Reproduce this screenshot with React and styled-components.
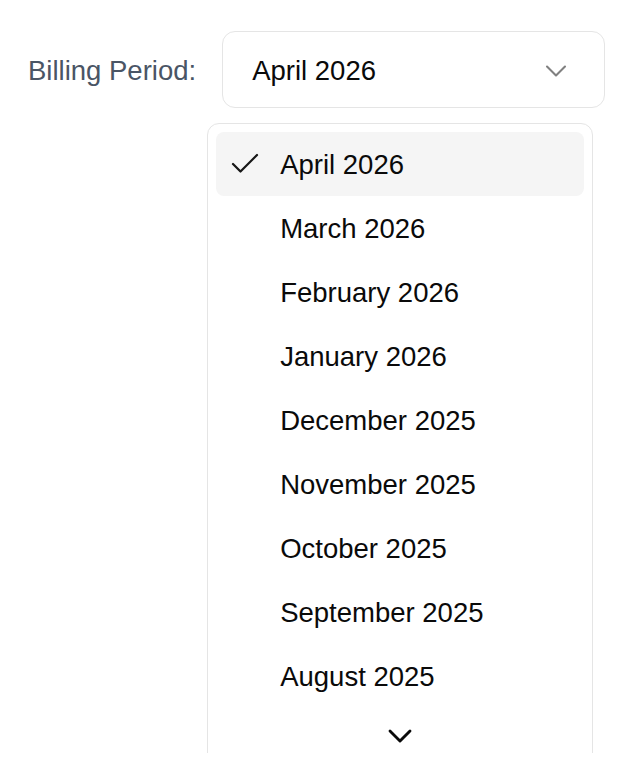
import styled, { createGlobalStyle } from "styled-components";
import { Check, ChevronDown } from "lucide-react";

const GlobalStyle = createGlobalStyle`
    html, body {
        margin: 0;
        padding: 0;
        background: #ffffff;
    }

    body {
        font-family: "Liberation Sans", Arial, sans-serif;
    }
`;

const Page = styled.div`
    height: 753px;
    overflow: hidden;
    padding: 31px 0 0 28px;
    box-sizing: border-box;
`;

const Field = styled.div`
    display: flex;
    align-items: center;
    gap: 26px;
`;

const Label = styled.label`
    color: #4a5565;
    font-size: 27.5px;
    padding-top: 2px;
`;

const SelectWrap = styled.div`
    position: relative;
`;

const Trigger = styled.button`
    width: 383px;
    height: 77px;
    box-sizing: border-box;
    display: flex;
    align-items: center;
    justify-content: space-between;
    padding: 2px 30px 0 29px;
    background: #ffffff;
    border: 1.5px solid #e5e5e5;
    border-radius: 13px;
    font-family: inherit;
    font-size: 27.5px;
    color: #0a0a0a;
    cursor: pointer;

    svg {
        color: #737373;
        opacity: 0.9;
    }
`;

const Content = styled.div`
    position: absolute;
    top: calc(100% + 15px);
    left: -15px;
    width: 386px;
    box-sizing: border-box;
    padding: 8px;
    background: #ffffff;
    border: 1.5px solid #e5e5e5;
    border-radius: 12px;
`;

const Item = styled.div`
    height: 64px;
    box-sizing: border-box;
    display: flex;
    align-items: center;
    padding: 2px 0 0 64px;
    position: relative;
    border-radius: 8px;
    font-size: 27.5px;
    color: #0a0a0a;
    background: ${(p) => (p.$active ? "#f5f5f5" : "transparent")};
`;

const Indicator = styled.span`
    position: absolute;
    left: 11px;
    top: 50%;
    transform: translateY(-50%);
    display: flex;
    color: #171717;
`;

const ScrollDown = styled.div`
    height: 56px;
    display: flex;
    align-items: center;
    justify-content: center;
    color: #0a0a0a;
`;

const periods = [
    "April 2026",
    "March 2026",
    "February 2026",
    "January 2026",
    "December 2025",
    "November 2025",
    "October 2025",
    "September 2025",
    "August 2025",
];

const App = () => {
    const selected = periods[0];

    return (
        <>
            <GlobalStyle />
            <Page>
                <Field>
                    <Label>Billing Period:</Label>
                    <SelectWrap>
                        <Trigger type="button">
                            <span>{selected}</span>
                            <ChevronDown size={36} strokeWidth={1.4} />
                        </Trigger>
                        <Content>
                            {periods.map((period) => (
                                <Item key={period} $active={period === selected}>
                                    {period === selected && (
                                        <Indicator>
                                            <Check size={36} strokeWidth={1.5} />
                                        </Indicator>
                                    )}
                                    {period}
                                </Item>
                            ))}
                            <ScrollDown>
                                <ChevronDown size={40} strokeWidth={1.7} />
                            </ScrollDown>
                        </Content>
                    </SelectWrap>
                </Field>
            </Page>
        </>
    );
};

export default App;
